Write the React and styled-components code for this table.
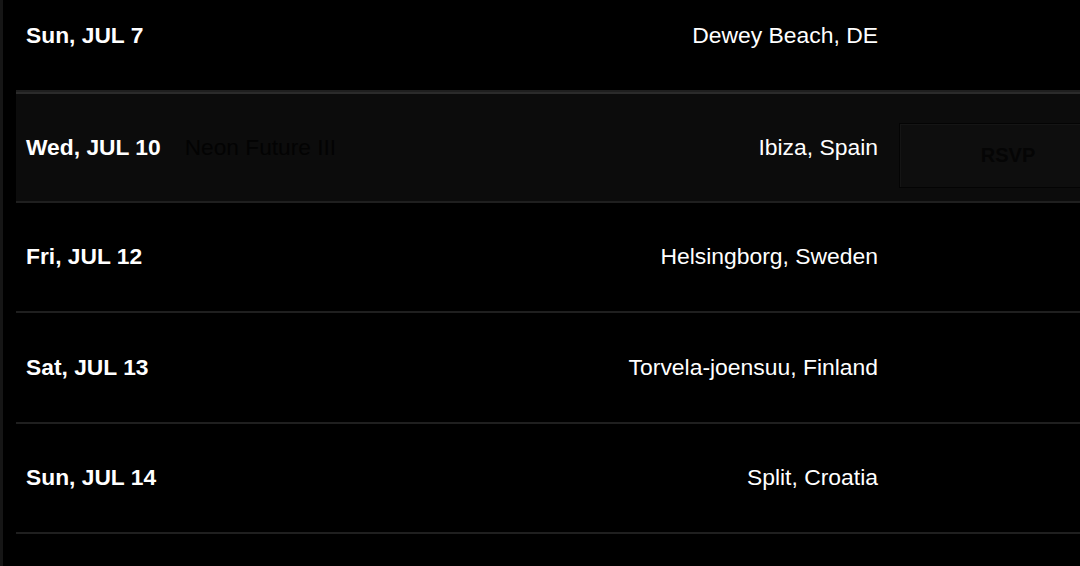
import React from "react";
import styled, { createGlobalStyle } from "styled-components";

const Global = createGlobalStyle`
  html, body {
    margin: 0;
    padding: 0;
    background: #000;
    overflow: hidden;
  }
  body {
    font-family: "Liberation Sans", Arial, Helvetica, sans-serif;
    color: #fff;
  }
`;

const Page = styled.div`
  width: 1080px;
  height: 566px;
  overflow: hidden;
  background: #000;
  border-left: 3px solid #161616;
  box-sizing: border-box;
  padding-left: 13px;
`;

const List = styled.ul`
  list-style: none;
  margin: -19px 0 0 0;
  padding: 0;
  width: 1111px;
`;

const Row = styled.li`
  display: grid;
  grid-template-columns: auto 1fr auto 218px;
  align-items: center;
  padding: 0 10px;
  background: ${(p) => (p.$active ? "#0c0c0c" : "#000")};
  border-top: ${(p) => (p.$active ? "2px solid #2b2b2b" : "none")};
  border-bottom: 2px solid #1f1f1f;
  height: ${(p) => (p.$active ? "107px" : "108.5px")};
`;

const DateText = styled.span`
  font-size: 22.8px;
  font-weight: 700;
  color: #fff;
`;

const Title = styled.span`
  font-size: 22.7px;
  font-weight: 400;
  color: #030303;
  margin-left: 24px;
`;

const Location = styled.span`
  font-size: 22.9px;
  font-weight: 400;
  color: #fff;
  text-align: right;
  margin-right: 21px;
`;

const Rsvp = styled.button`
  height: 65px;
  width: 218px;
  margin-top: 16px;
  background: #0e0e0e;
  border: 1px solid #040404;
  box-shadow: inset 1px 1px 0 #151515;
  font-family: "Liberation Sans", Arial, sans-serif;
  font-size: 20px;
  font-weight: 700;
  color: #050505;
  visibility: ${(p) => (p.$show ? "visible" : "hidden")};
  padding: 0;
  cursor: pointer;
`;

const shows = [
  { date: "Sun, JUL 7", title: "", loc: "Dewey Beach, DE" },
  { date: "Wed, JUL 10", title: "Neon Future III", loc: "Ibiza, Spain", active: true },
  { date: "Fri, JUL 12", title: "", loc: "Helsingborg, Sweden" },
  { date: "Sat, JUL 13", title: "", loc: "Torvela-joensuu, Finland" },
  { date: "Sun, JUL 14", title: "", loc: "Split, Croatia" },
  { date: "", title: "", loc: "" },
];

export default function App() {
  return (
    <>
      <Global />
      <Page>
        <List>
          {shows.map((s, i) => (
            <Row key={i} $active={s.active}>
              <DateText>{s.date}</DateText>
              <Title>{s.title}</Title>
              <Location>{s.loc}</Location>
              <Rsvp $show={s.active}>RSVP</Rsvp>
            </Row>
          ))}
        </List>
      </Page>
    </>
  );
}
